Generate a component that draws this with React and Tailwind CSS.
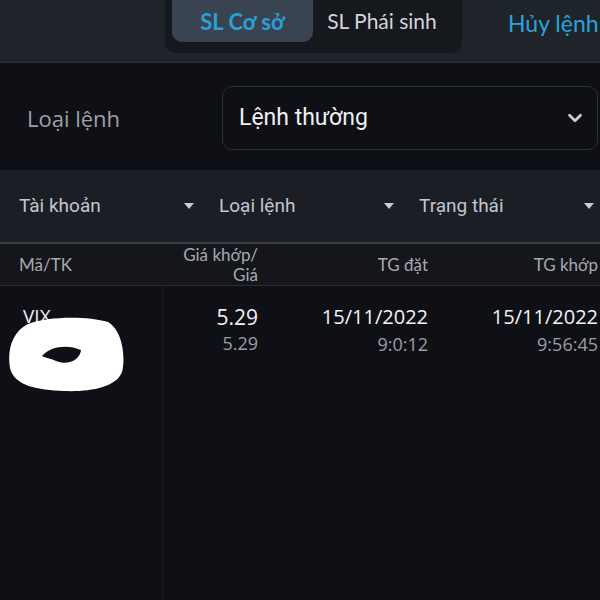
import { ChevronDown } from 'lucide-react';

// Order book screen: market tabs, order type select, filters and one order row.

const Caret = () => (
  <svg width="12" height="8" viewBox="0 0 12 8" className="shrink-0">
    <path d="M1 1h10L6 7z" fill="#c9ccd2" />
  </svg>
);

const Filter = ({ label }) => (
  <div className="flex w-[200px] items-center justify-between pl-[19px] pr-[5px]">
    <span>{label}</span>
    <Caret />
  </div>
);

export default function App() {
  return (
    <div className="relative h-[600px] w-[600px] overflow-hidden bg-[#0e1015] font-['Roboto',sans-serif]">
      {/* tabs */}
      <div className="flex h-[63px] items-start bg-[#1f232a] border-b border-[#2a2e35]">
        <div className="ml-[165px] flex h-[53px] w-[297px] items-start rounded-b-[10px] bg-[#15181d] px-[7px] font-['Lato',sans-serif] text-[21px]">
          <div className="flex h-[42px] w-[141px] items-center justify-center rounded-b-[10px] bg-[#3a4350] text-[22px] font-bold text-[#2a9fd8]">
            SL Cơ sở
          </div>
          <div className="flex h-[42px] flex-1 items-center justify-center pr-[4px] text-[#d2d5da]">
            SL Phái sinh
          </div>
        </div>
        <div className="ml-[46px] flex h-[46px] items-center whitespace-nowrap font-['Lato',sans-serif] text-[23px] text-[#2aa3dd]">
          Hủy lệnh
        </div>
      </div>

      {/* order type */}
      <div className="flex h-[107px] items-start bg-[#0e1015] pt-[23px]">
        <div className="flex h-[64px] w-[222px] items-center pl-[27px] font-['Open_Sans',sans-serif] text-[22px] text-[#9da1a8]">
          Loại lệnh
        </div>
        <div className="flex h-[64px] w-[376px] items-center justify-between rounded-[10px] border border-[#2b2f37] pl-[16px] pr-[11px] text-[23px] text-[#eef0f2]">
          <span>Lệnh thường</span>
          <ChevronDown size={22} strokeWidth={3} color="#c9ccd1" />
        </div>
      </div>

      {/* filters */}
      <div className="flex h-[74px] items-center border-b-2 border-[#3b3f46] bg-[#1b1e25] text-[19px] text-[#c3c6cc]">
        <Filter label="Tài khoản" />
        <Filter label="Loại lệnh" />
        <Filter label="Trạng thái" />
      </div>

      {/* table header */}
      <div className="grid h-[42px] grid-cols-[163px_95px_170px_170px] items-center border-b border-[#2a2d33] bg-[#14161b] font-['Lato',sans-serif] text-[17px] text-[#a6aab0]">
        <div className="pl-[19px]">Mã/TK</div>
        <div className="text-right leading-[20px]">
          Giá khớp/
          <br />
          Giá
        </div>
        <div className="text-right">TG đặt</div>
        <div className="whitespace-nowrap text-right">TG khớp</div>
      </div>

      {/* rows */}
      <div className="grid h-[315px] grid-cols-[163px_95px_170px_170px] font-['Open_Sans',sans-serif]">
        <div className="border-r border-[#171a20] pl-[23px] pt-[16px] text-[19px] text-[#f2f3f5]">VIX</div>
        <div className="pt-[17px] text-right">
          <div className="text-[21px] leading-[28px] text-[#f2f3f5]">5.29</div>
          <div className="text-[18px] leading-[24px] text-[#9a9ea5]">5.29</div>
        </div>
        <div className="pt-[17px] text-right">
          <div className="text-[20px] leading-[28px] text-[#f2f3f5]">15/11/2022</div>
          <div className="text-[18px] leading-[26px] text-[#9a9ea5]">9:0:12</div>
        </div>
        <div className="pt-[17px] text-right">
          <div className="text-[20px] leading-[28px] text-[#f2f3f5]">15/11/2022</div>
          <div className="text-[18px] leading-[26px] text-[#9a9ea5]">9:56:45</div>
        </div>
      </div>

      {/* hand-drawn redaction over the account number */}
      <svg className="absolute left-[8px] top-[316px]" width="118" height="76" viewBox="0 0 118 76">
        <path
          d="M20 8 C40 0 80 0 100 6 C114 14 118 40 114 56 C108 72 80 76 56 75 C30 74 6 70 2 52 C-1 34 4 16 20 8 Z"
          fill="#ffffff"
        />
        <path d="M34 40 C42 30 60 28 73 34 C72 44 60 50 48 45 C42 42 38 42 34 40 Z" fill="#0e1015" />
      </svg>
    </div>
  );
}
